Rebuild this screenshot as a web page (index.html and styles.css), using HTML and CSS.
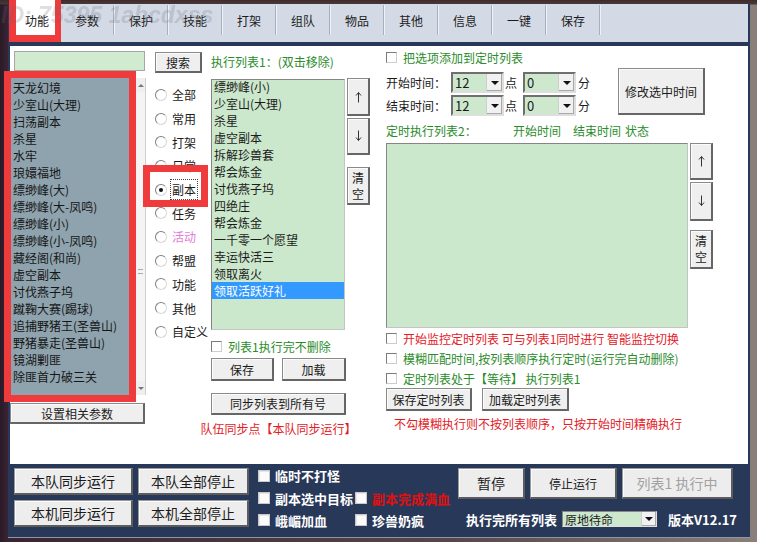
FILE: index.html
```html
<!DOCTYPE html>
<html lang="zh">
<head>
<meta charset="utf-8">
<title>功能</title>
<link rel="stylesheet" href="styles.css">
</head>
<body>
<div class="frame">
  <div class="tabs">
    <div class="tab active">功能</div>
    <div class="tab">参数</div>
    <div class="tab">保护</div>
    <div class="tab">技能</div>
    <div class="tab">打架</div>
    <div class="tab">组队</div>
    <div class="tab">物品</div>
    <div class="tab">其他</div>
    <div class="tab">信息</div>
    <div class="tab">一键</div>
    <div class="tab">保存</div>
  </div>

  <div class="panel">
    <div class="colA">
      <div class="search-input"></div>
      <div class="listwrap">
        <div class="graylist">
          <div>天龙幻境</div>
          <div>少室山(大理)</div>
          <div>扫荡副本</div>
          <div>杀星</div>
          <div>水牢</div>
          <div>琅嬛福地</div>
          <div>缥缈峰(大)</div>
          <div>缥缈峰(大-凤鸣)</div>
          <div>缥缈峰(小)</div>
          <div>缥缈峰(小-凤鸣)</div>
          <div>藏经阁(和尚)</div>
          <div>虚空副本</div>
          <div>讨伐燕子坞</div>
          <div>蹴鞠大赛(踢球)</div>
          <div>追捕野猪王(圣兽山)</div>
          <div>野猪暴走(圣兽山)</div>
          <div>镜湖剿匪</div>
          <div>除匪首力破三关</div>
        </div>
        <div class="vscroll">
          <span class="sb-btn"><i class="tri-up"></i></span>
          <span class="sb-track"><i class="grip"></i></span>
          <span class="sb-btn"><i class="tri-dn"></i></span>
        </div>
      </div>
      <button class="btn set-btn">设置相关参数</button>
    </div>

    <div class="colB">
      <button class="btn search-btn">搜索</button>
      <div class="radios">
        <div class="radio"><span class="rd"></span><span>全部</span></div>
        <div class="radio"><span class="rd"></span><span>常用</span></div>
        <div class="radio"><span class="rd"></span><span>打架</span></div>
        <div class="radio"><span class="rd"></span><span>日常</span></div>
        <div class="radio"><span class="rd on"></span><span class="focus">副本</span></div>
        <div class="radio"><span class="rd"></span><span>任务</span></div>
        <div class="radio"><span class="rd"></span><span class="pink">活动</span></div>
        <div class="radio"><span class="rd"></span><span>帮盟</span></div>
        <div class="radio"><span class="rd"></span><span>功能</span></div>
        <div class="radio"><span class="rd"></span><span>其他</span></div>
        <div class="radio"><span class="rd"></span><span>自定义</span></div>
      </div>
    </div>

    <div class="colC">
      <div class="green lbl1">执行列表1：(双击移除)</div>
      <div class="listrow">
        <div class="greenlist list1">
          <div class="items">
            <div>缥缈峰(小)</div>
            <div>少室山(大理)</div>
            <div>杀星</div>
            <div>虚空副本</div>
            <div>拆解珍兽套</div>
            <div>帮会炼金</div>
            <div>讨伐燕子坞</div>
            <div>四绝庄</div>
            <div>帮会炼金</div>
            <div>一千零一个愿望</div>
            <div>幸运快活三</div>
            <div>领取离火</div>
            <div class="sel">领取活跃好礼</div>
          </div>
        </div>
        <div class="sidebtns s1">
          <button class="btn arrow-btn b-up"><svg width="7" height="12" viewBox="0 0 7 12"><path d="M3.5 1.5V11.5M1 4.5L3.5 1.5L6 4.5" fill="none" stroke="#333" stroke-width="1"/></svg></button>
          <button class="btn arrow-btn b-dn"><svg width="7" height="12" viewBox="0 0 7 12"><path d="M3.5 0.5V10.5M1 7.5L3.5 10.5L6 7.5" fill="none" stroke="#333" stroke-width="1"/></svg></button>
          <button class="btn clr-btn">清<br>空</button>
        </div>
      </div>
      <div class="cbrow c-keep"><span class="cb"></span><span class="green">列表1执行完不删除</span></div>
      <div class="btnrow">
        <button class="btn b-save">保存</button>
        <button class="btn b-load">加载</button>
      </div>
      <button class="btn sync">同步列表到所有号</button>
      <div class="sync-note"><span class="red">队伍同步点【本队同步运行】</span></div>
    </div>

    <div class="colD">
      <div class="cbrow c-add"><span class="cb"></span><span class="green">把选项添加到定时列表</span></div>
      <div class="timeblock">
        <div class="timerows">
          <div class="trow">
            <span class="tlabel">开始时间：</span>
            <div class="combo tc"><span>12</span><i class="arr"><b></b></i></div>
            <span class="unit">点</span>
            <div class="combo tc"><span>0</span><i class="arr"><b></b></i></div>
            <span class="unit u2">分</span>
          </div>
          <div class="trow">
            <span class="tlabel">结束时间：</span>
            <div class="combo tc"><span>12</span><i class="arr"><b></b></i></div>
            <span class="unit">点</span>
            <div class="combo tc"><span>0</span><i class="arr"><b></b></i></div>
            <span class="unit u2">分</span>
          </div>
        </div>
        <button class="btn modify">修改选中时间</button>
      </div>
      <div class="l2head green">
        <span class="h1">定时执行列表2：</span>
        <span class="h2">开始时间</span>
        <span class="h3">结束时间</span>
        <span>状态</span>
      </div>
      <div class="listrow">
        <div class="greenlist list2"></div>
        <div class="sidebtns s2">
          <button class="btn arrow-btn b2-up"><svg width="7" height="12" viewBox="0 0 7 12"><path d="M3.5 1.5V11.5M1 4.5L3.5 1.5L6 4.5" fill="none" stroke="#333" stroke-width="1"/></svg></button>
          <button class="btn arrow-btn b2-dn"><svg width="7" height="12" viewBox="0 0 7 12"><path d="M3.5 0.5V10.5M1 7.5L3.5 10.5L6 7.5" fill="none" stroke="#333" stroke-width="1"/></svg></button>
          <button class="btn clr-btn c2">清<br>空</button>
        </div>
      </div>
      <div class="checks2">
        <div class="cbrow r20"><span class="cb"></span><span class="red">开始监控定时列表 可与列表1同时进行 智能监控切换</span></div>
        <div class="cbrow r20"><span class="cb"></span><span class="green">模糊匹配时间,按列表顺序执行定时(运行完自动删除)</span></div>
        <div class="cbrow r20"><span class="cb"></span><span class="green">定时列表处于【等待】 执行列表1</span></div>
      </div>
      <div class="btnrow2">
        <button class="btn t-save">保存定时列表</button>
        <button class="btn t-load">加载定时列表</button>
      </div>
      <div class="red note2">不勾模糊执行则不按列表顺序，只按开始时间精确执行</div>
    </div>
  </div>

  <div class="bottom">
    <div class="bgrid">
      <button class="btn bb w1">本队同步运行</button>
      <button class="btn bb w2">本队全部停止</button>
      <button class="btn bb w1">本机同步运行</button>
      <button class="btn bb w2">本机全部停止</button>
    </div>
    <div class="checks">
      <div class="brow h23"><span class="bcb"></span><span class="bt">临时不打怪</span></div>
      <div class="brow"><span class="bcb"></span><span class="bt bl">副本选中目标</span><span class="bcb b2"></span><span class="bt redb">副本完成满血</span></div>
      <div class="brow"><span class="bcb"></span><span class="bt bl">峨嵋加血</span><span class="bcb b2"></span><span class="bt">珍兽奶疯</span></div>
    </div>
    <div class="bright">
      <div class="rbtns">
        <button class="btn bb pause">暂停</button>
        <button class="btn bb stop">停止运行</button>
        <button class="btn bb running">列表1 执行中</button>
      </div>
      <div class="rrow">
        <span class="bt">执行完所有列表</span>
        <div class="combo small"><span>原地待命</span><i class="arr"><b></b></i></div>
        <span class="bt ver">版本V12.17</span>
      </div>
    </div>
  </div>
</div>

<div class="mark mark-tab"></div>
<div class="mark mark-list"></div>
<div class="mark mark-radio"></div>
<div class="watermark">ID: 75395 1abcdxss</div>
</body>
</html>
```

FILE: styles.css
```css
* { box-sizing: border-box; }
html, body { margin: 0; padding: 0; }
body {
  width: 757px;
  height: 542px;
  overflow: hidden;
  position: relative;
  padding: 4px 0 0 8px;
  background:
    linear-gradient(180deg, #3e2c2d 0, #4a3838 4px, rgba(0,0,0,0) 5px),
    linear-gradient(90deg, #2a1a27 0, #3a2433 8px, #55474a 60%, #8a7f7b 100%);
  font-family: "Noto Sans CJK SC", "Noto Sans", sans-serif;
  font-size: 12px;
  line-height: 17px;
  color: #1b1b1b;
}
button { font: inherit; color: inherit; margin: 0; padding: 0; display: block; cursor: default; }

.green { color: #2a8c2a; }
.red { color: #e3201f; }
.pink { color: #e57bd8; }

/* frame */
.frame {
  width: 742px;
  height: 533px;
  background: #283858;
  padding: 0 2px 2px;
  display: flex;
  flex-direction: column;
  box-shadow: 0 1px 0 #9097a3;
}

/* tabs */
.tabs {
  height: 38px;
  background: #d3dae6;
  display: flex;
}
.tab {
  position: relative;
  width: 54px;
  height: 38px;
  line-height: 34px;
  text-align: center;
  color: #1c1c1c;
}
.tab::after {
  content: "";
  position: absolute;
  right: 0;
  top: 1px;
  width: 1px;
  height: 30px;
  background: #a8b0be;
  box-shadow: 1px 0 0 #eef1f6;
}
.tab.active {
  width: 50px;
  margin-top: -4px;
  height: 42px;
  line-height: 42px;
  padding-left: 4px;
  background: #fff;
}

/* main white panel */
.panel {
  margin-top: 4px;
  height: 418px;
  background: #fff;
  display: flex;
}
.colA { width: 140px; }
.colB { width: 61px; }
.colC { width: 175px; }
.colD { width: 362px; }

.btn {
  background: #efefef;
  border: 1px solid #8a8a8a;
  border-right: 2px solid #666;
  border-bottom: 2px solid #666;
  box-shadow: inset 1px 1px 0 #fbfbfb;
  text-align: center;
  line-height: 15px;
}

/* column A */
.search-input {
  margin: 5px 0 0 4px;
  width: 131px;
  height: 20px;
  background: #d0ebd0;
  border: 1px solid #a6a6a6;
}
.listwrap { display: flex; margin-top: 1px; }
.graylist {
  width: 126px;
  height: 328px;
  background: #8fa3ae;
  padding: 6.5px 0 0 3px;
  overflow: hidden;
  white-space: nowrap;
  color: #161616;
}
.vscroll {
  width: 10px;
  height: 317px;
  margin-top: 6px;
  background: #e9e9e9;
  display: flex;
  flex-direction: column;
  border-right: 1px solid #cfcfcf;
}
.sb-btn {
  height: 14px;
  background: #efefef;
  display: flex;
  align-items: center;
  justify-content: center;
}
.sb-track { flex: 1; display: flex; align-items: center; justify-content: center; background: #f4f4f4; }
.grip { width: 5px; height: 5px; border-top: 1px solid #aaa; border-bottom: 1px solid #aaa; margin-top: 70px; }
.tri-up { width: 0; height: 0; border-left: 3px solid transparent; border-right: 3px solid transparent; border-bottom: 3px solid #777; }
.tri-dn { width: 0; height: 0; border-left: 3px solid transparent; border-right: 3px solid transparent; border-top: 3px solid #777; }
.set-btn { margin-top: 3px; width: 135px; height: 21px; }

/* column B */
.search-btn { margin: 6px 0 0 5px; width: 47px; height: 21px; }
.radios { margin-top: 10px; }
.radio {
  height: 23.7px;
  display: flex;
  align-items: center;
  white-space: nowrap;
}
.rd {
  width: 12px;
  height: 12px;
  margin: 0 5px 0 5px;
  border-radius: 50%;
  background: #fff;
  border: 1px solid;
  border-color: #7f7f7f #d6d6d6 #d6d6d6 #7f7f7f;
  position: relative;
  flex: none;
}
.rd.on::after {
  content: "";
  position: absolute;
  left: 3px;
  top: 3px;
  width: 4px;
  height: 4px;
  border-radius: 50%;
  background: #111;
}
.focus { outline: 1px dotted #444; outline-offset: 1px; }

/* column C */
.lbl1 { margin-top: 6.5px; white-space: nowrap; }
.listrow { display: flex; }
.colC .listrow { margin-top: 9.5px; }
.greenlist {
  background: #cce8cc;
  border: 1px solid;
  border-color: #858585 #c4c4c4 #c4c4c4 #858585;
  overflow: hidden;
}
.list1 { width: 134px; height: 251px; }
.list1 .items { margin-top: -2.5px; white-space: nowrap; }
.list1 .items div { padding-left: 2px; }
.list1 .items .sel { background: #3399ff; color: #fff; }
.sidebtns { margin-left: 2px; width: 23px; }
.arrow-btn { width: 23px; display: flex; align-items: center; justify-content: center; }
.clr-btn { width: 23px; line-height: 16px; font-size: 12px; }
.s1 .b-up { margin-top: -1px; height: 38px; }
.s1 .b-dn { margin-top: 2px; height: 37px; }
.s1 .clr-btn { margin-top: 12px; height: 38px; }

.cbrow { display: flex; align-items: center; height: 17px; white-space: nowrap; }
.cb {
  width: 11px;
  height: 11px;
  background: #fff;
  border: 1px solid;
  border-color: #7b7b7b #cdcdcd #cdcdcd #7b7b7b;
  margin-right: 6px;
  flex: none;
}
.c-keep { margin-top: 7.5px; }
.btnrow { display: flex; gap: 8px; margin-top: 3.5px; }
.b-save { width: 63px; height: 23px; }
.b-load { width: 64px; height: 23px; }
.sync { margin-top: 12px; width: 135px; height: 22px; }
.sync-note {
  margin-top: 4.5px;
  width: 135px;
  display: flex;
  justify-content: center;
  white-space: nowrap;
}

/* column D */
.c-add { margin-top: 2.5px; }
.timeblock { display: flex; margin-top: 2.5px; height: 48px; }
.timerows { width: 232px; padding-top: 4px; display: flex; flex-direction: column; gap: 2px; }
.trow { display: flex; align-items: center; height: 21px; white-space: nowrap; }
.tlabel { width: 65px; }
.combo {
  position: relative;
  display: flex;
  align-items: center;
  background: #cde8cd;
  border: 2px solid;
  border-color: #6f6f6f #dedede #dedede #6f6f6f;
}
.tc { width: 53px; height: 21px; padding-left: 2px; font-size: 13px; }
.arr {
  position: absolute;
  right: 0;
  top: 0;
  bottom: 0;
  width: 16px;
  background: #f1f1f1;
  border-left: 1px solid #cfcfcf;
  box-shadow: inset -1px -1px 0 #a9a9a9;
  display: flex;
  align-items: center;
  justify-content: center;
}
.arr b {
  width: 0;
  height: 0;
  border-left: 4px solid transparent;
  border-right: 4px solid transparent;
  border-top: 4px solid #111;
}
.unit { width: 19px; padding-left: 1px; }
.unit.u2 { padding-left: 2px; }
.modify { width: 87px; height: 47px; }

.l2head { margin-top: 5.5px; display: flex; white-space: nowrap; }
.l2head .h1 { width: 127px; }
.l2head .h2 { width: 60px; }
.l2head .h3 { width: 52px; }
.colD .listrow { margin-top: 4.5px; }
.list2 { width: 302px; height: 185px; }
.s2 .b2-up { height: 37px; }
.s2 .b2-dn { margin-top: 2px; height: 39px; }
.s2 .c2 { margin-top: 9px; height: 39px; }
.r20 { height: 20px; }
.btnrow2 { display: flex; gap: 10px; }
.t-save { width: 86px; height: 23px; }
.t-load { width: 87px; height: 23px; }
.note2 { margin: 3.5px 0 0 8px; white-space: nowrap; }

/* bottom bar */
.bottom {
  height: 71px;
  display: flex;
  padding-left: 4px;
  color: #fff;
}
.bgrid {
  display: grid;
  grid-template-columns: 119px 111px;
  grid-template-rows: 27px 27px;
  gap: 5px;
  padding-top: 4px;
  color: #1b1b1b;
}
.bb { font-size: 14px; background: #ededed; border-color: #9a9a9a; border-right-color: #5c5c5c; border-bottom-color: #5c5c5c; }
.checks { margin-left: 9px; width: 200px; }
.brow { display: flex; align-items: center; height: 22px; white-space: nowrap; }
.brow.h23 { height: 23px; }
.bcb {
  width: 12px;
  height: 12px;
  background: #fbfbfb;
  border: 1px solid #c9c9c9;
  box-shadow: inset 1px 1px 0 #e6e6e6;
  flex: none;
}
.bt { font-weight: 700; font-size: 13px; color: #fff; }
.brow .bt { margin-left: 5px; }
.brow .bl { width: 80px; }
.redb { color: #e01010; }
.bright { display: flex; flex-direction: column; }
.rbtns { display: flex; gap: 5px; padding-top: 4px; color: #1b1b1b; }
.pause { width: 67px; height: 31px; }
.stop { width: 87px; height: 31px; font-size: 12px; }
.running { width: 111px; height: 31px; color: #a2a2a2; }
.rrow { display: flex; align-items: center; margin-top: 11px; height: 18px; white-space: nowrap; }
.rrow .bt:first-child { margin-left: 8px; }
.combo.small {
  margin-left: 5px;
  width: 95px;
  height: 16px;
  padding-left: 2px;
  color: #1b1b1b;
  border-width: 1px;
  border-color: #888 #e0e0e0 #e0e0e0 #888;
}
.combo.small .arr { width: 15px; }
.ver { margin-left: 11px; }

/* red annotation overlays */
.mark {
  position: absolute;
  border: 7px solid #ef3b3b;
  pointer-events: none;
}
.mark-tab { left: 9px; top: -7px; width: 52px; height: 49px; border-right-width: 6px; }
.mark-list { left: 4px; top: 71px; width: 132px; height: 331px; }
.mark-radio { left: 143px; top: 165px; width: 65px; height: 42px; }

.watermark {
  position: absolute;
  left: 1px;
  top: 1px;
  font-family: "Liberation Sans", sans-serif;
  font-style: italic;
  font-weight: 700;
  font-size: 23px;
  line-height: 28px;
  color: rgba(105, 105, 120, 0.24);
  white-space: nowrap;
  pointer-events: none;
}
```
